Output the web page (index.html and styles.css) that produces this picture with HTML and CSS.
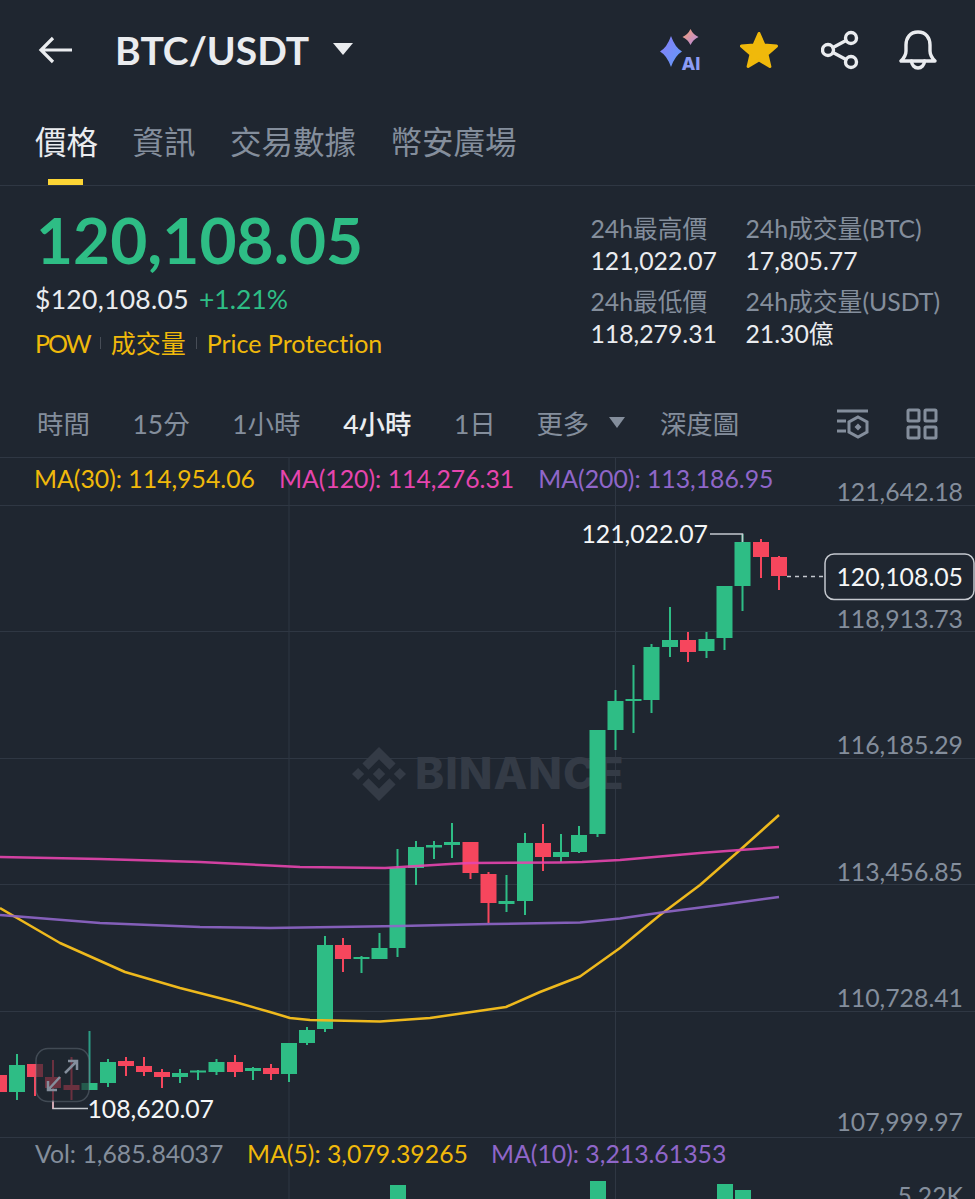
FILE: index.html
```html
<!DOCTYPE html>
<html lang="zh-Hant">

<head>
    <meta charset="UTF-8">
    <meta name="viewport" content="width=device-width, initial-scale=1.0">
    <title>BTC/USDT</title>
    <link rel="stylesheet" href="styles.css">
</head>

<body>
    <header class="topbar">
        <svg class="back" width="36" height="28" viewBox="0 0 36 28">
            <path d="M34 14H3M15 2 3 14l12 12" />
        </svg>
        <h1 class="pair">BTC/USDT</h1>
        <svg class="caret" width="22" height="14" viewBox="0 0 22 14">
            <path d="M1 1h20L11 13z" />
        </svg>
        <div class="actions">
            <svg class="icon-ai" width="44" height="48" viewBox="0 0 44 48">
                <defs>
                    <linearGradient id="aiBlue" x1="0" y1="0" x2="1" y2="1">
                        <stop offset="0" stop-color="#8a7cf8" />
                        <stop offset="1" stop-color="#5f9cf8" />
                    </linearGradient>
                    <linearGradient id="aiPeach" x1="0" y1="0" x2="1" y2="1">
                        <stop offset="0" stop-color="#f6a06e" />
                        <stop offset="1" stop-color="#b58be8" />
                    </linearGradient>
                </defs>
                <path fill="url(#aiBlue)" d="M12 10Q16 21.500 23 25.500 16 29.500 12 41 8 29.500 1 25.500 8 21.500 12 10z" />
                <path fill="url(#aiPeach)" d="M31.500 3Q34 8.500 39.500 11 34 13.500 31.500 19 29 13.500 23.500 11 29 8.500 31.500 3z" />
                <text class="ai-label" x="22.500" y="44">AI</text>
            </svg>
            <svg class="icon-star" width="40" height="38" viewBox="0 0 40 38">
                <path class="star" d="M20 2.500l5 11.500 12.500 1.100-9.500 8.200 2.900 12.200L20 29l-10.900 6.500L12 23.300 2.500 15.100 15 14z" />
            </svg>
            <svg class="stroke-icon" width="38" height="40" viewBox="0 0 38 40">
                <circle cx="30" cy="8" r="5.500" />
                <circle cx="7" cy="20" r="5.500" />
                <circle cx="30" cy="32" r="5.500" />
                <path d="M12 17.500 25 10.500M12 22.500 25 29.500" />
            </svg>
            <svg class="stroke-icon" width="38" height="40" viewBox="0 0 38 40">
                <path d="M19 2C11 2 7 8 7 15v6c0 4-2 7-5 10h34c-3-3-5-6-5-10v-6c0-7-4-13-12-13z" />
                <path d="M12.500 31c0 4 3 7 6.500 7s6.500-3 6.500-7" />
            </svg>
        </div>
    </header>

    <nav class="tabs">
        <a class="tab active">價格</a>
        <a class="tab">資訊</a>
        <a class="tab">交易數據</a>
        <a class="tab">幣安廣場</a>
    </nav>

    <section class="summary">
        <div class="price-col">
            <div class="last-price">120,108.05</div>
            <div class="fiat-row">
                <span class="fiat">$120,108.05</span>
                <span class="change">+1.21%</span>
            </div>
            <div class="tag-row">
                <span class="tag-pow">POW</span>
                <i class="tag-sep"></i>
                <span>成交量</span>
                <i class="tag-sep"></i>
                <span>Price Protection</span>
            </div>
        </div>
        <dl class="stats">
            <div class="stat stat-a">
                <dt>24h最高價</dt>
                <dd>121,022.07</dd>
            </div>
            <div class="stat">
                <dt>24h成交量(BTC)</dt>
                <dd>17,805.77</dd>
            </div>
            <div class="stat stat-a">
                <dt>24h最低價</dt>
                <dd>118,279.31</dd>
            </div>
            <div class="stat">
                <dt>24h成交量(USDT)</dt>
                <dd>21.30億</dd>
            </div>
        </dl>
    </section>

    <div class="intervals">
        <span class="interval">時間</span>
        <span class="interval">15分</span>
        <span class="interval">1小時</span>
        <span class="interval current">4小時</span>
        <span class="interval">1日</span>
        <span class="interval more">更多
            <svg width="16" height="11" viewBox="0 0 16 11">
                <path d="M0 0h16L8 11z" />
            </svg>
        </span>
        <span class="interval">深度圖</span>
        <div class="tools">
            <svg class="tool" width="34" height="32" viewBox="0 0 34 32">
                <path d="M1 3h31M1 13h9M1 23h9" />
                <path d="M22 9l9 5v10l-9 5-9-5V14z" />
                <path class="tool-dot" d="M22 15.500l3.500 3.500-3.500 3.500-3.500-3.500z" />
            </svg>
            <svg class="tool" width="32" height="32" viewBox="0 0 32 32">
                <rect x="2" y="2" width="11" height="11" rx="1" />
                <rect x="19" y="2" width="11" height="11" rx="1" />
                <rect x="2" y="19" width="11" height="11" rx="1" />
                <rect x="19" y="19" width="11" height="11" rx="1" />
            </svg>
        </div>
    </div>

    <section class="chart">
        <div class="ma-legend">
            <span class="ma-30">MA(30): 114,954.06</span>
            <span class="ma-120">MA(120): 114,276.31</span>
            <span class="ma-200">MA(200): 113,186.95</span>
        </div>

        <!-- page coordinates, so y values read the same as the screenshot -->
        <svg class="chart-svg" width="975" height="742" viewBox="0 457 975 742">
            <path class="grid" d="M0 505.500H975M0 631.500H975M0 758.500H975M0 884.500H975M0 1011.500H975M0 1137.500H975M289 457V1199M615.500 457V1199" />

            <g class="watermark">
                <svg x="352" y="747" width="54" height="54" viewBox="0 0 126.610 126.610">
                    <path d="m38.730 53.200 24.590-24.580 24.600 24.600 14.300-14.310L63.320 0 24.430 38.890z" />
                    <path d="m0 63.310 14.300-14.310 14.310 14.310-14.310 14.300z" />
                    <path d="m38.730 73.410 24.590 24.590 24.600-24.600 14.310 14.290-38.900 38.910-38.900-38.880-.02-.02z" />
                    <path d="m98 63.310 14.300-14.310 14.310 14.300-14.310 14.320z" />
                    <path d="m77.830 63.300-14.510-14.520-10.730 10.730-1.240 1.230-2.540 2.540 14.510 14.500 14.510-14.470z" />
                </svg>
                <text class="watermark-text" x="415" y="789">BINANCE</text>
            </g>

            <!-- wicks and bodies, one path per colour -->
            <path class="wick up" d="M17 1054V1100M108 1059V1087M180 1069V1083M198 1070V1080M216.500 1059V1075M253 1067V1080M289 1043V1082M307 1027V1045M325 936V1032M361.500 956V973M379.500 933V959M397.500 849V957M416 841V885M434 841V859M452 823V858M506.500 875V912M525 833V915M561 834V862M579 826V853M597.500 730V837M615.500 690V750M633.500 665V733M651.500 644V713M670 607V657M706.500 632V658M724.500 586V650M742.500 534V611" />
            <path class="wick up-dim" d="M89.500 1031V1090" />
            <path class="body up" d="M17 1065V1092M89.500 1083V1090M108 1062V1083M180 1073V1077M198 1070.500V1072.500M216.500 1062V1072M253 1068V1071M289 1043V1074M307 1030V1043M325 945V1029M361.500 957V959M379.500 948V959M397.500 868V948M416 847V868M434 845V847.500M452 842V845M506.500 901V904M525 843V901M561 852V857M579 835V852M597.500 730V834M615.500 701V730M633.500 699V701M651.500 647V700M670 640V647M706.500 639V651M724.500 586V638M742.500 542V586" />
            <path class="wick down" d="M35 1064V1096M53 1060V1109M71.500 1057V1100M126 1057V1076M144 1057V1076M162 1069V1088M235 1055V1077M271 1064V1080M343 938V972M470.500 842V879M488.500 872V923M543 824V871M688 632V662M761 539V578M779 556V590" />
            <path class="body down" d="M-1 1075V1092M35 1064V1077M53 1077V1088M71.500 1085V1090M126 1061V1066M144 1066V1072M162 1072V1077M235 1062V1072M271 1068V1074M343 945V959M470.500 842V873M488.500 874V903M543 843V857M688 640V652M761 542V557M779 557V576" />

            <path class="ma-line line-30" d="M0 908 60 943 125 972 180 988 235 1002 270 1012 290 1018 310 1020 380 1021.500 430 1018 506 1007 540 992 580 976.500 620 948 660 915 700 885 740 850 779 815" />
            <path class="ma-line line-120" d="M0 857 100 859 200 862 270 865.500 300 867 385 868 450 864 470 863 560 862.500 582 862 620 860 700 853 740 850 779 847" />
            <path class="ma-line line-200" d="M0 915 100 923 200 927 270 928 400 926 490 924 580 922.500 620 918.500 665 912 720 905 779 897" />

            <g class="axis">
                <text x="963" y="501">121,642.18</text>
                <text x="963" y="628">118,913.73</text>
                <text x="963" y="754">116,185.29</text>
                <text x="963" y="881">113,456.85</text>
                <text x="963" y="1007">110,728.41</text>
                <text x="963" y="1131">107,999.97</text>
                <text x="963" y="1205">5.22K</text>
            </g>

            <path class="marker" d="M710 534H742.500V542M53 1100V1108.500H88" />
            <text class="price-label" x="708" y="543">121,022.07</text>
            <text class="price-label" x="214" y="1118">108,620.07</text>

            <path class="last-dash" d="M787 576.500H825" />
            <rect class="last-box" x="825" y="554" width="149" height="45.500" rx="9" />
            <text class="price-label" x="963" y="586">120,108.05</text>

            <rect class="expand-box" x="36" y="1048.500" width="53" height="53" rx="12" />
            <path class="expand" d="M48 1090 60 1077M48 1081V1090H57M65 1073 77 1061M68 1061H77V1070" />

            <text class="vol-text" x="35" y="1163">
                <tspan class="vol-label">Vol: 1,685.84037</tspan>
                <tspan class="vol-ma5" x="247">MA(5): 3,079.39265</tspan>
                <tspan class="vol-ma10" x="491">MA(10): 3,213.61353</tspan>
            </text>
            <path class="vol-bars" d="M390 1185h16v14h-16zM590 1181h16v18h-16zM717 1184h16v15h-16zM735 1190h16v9h-16z" />
        </svg>
    </section>
</body>

</html>
```

FILE: styles.css
```css
html {
    height: 100%;
}

body {
    margin: 0;
    width: 975px;
    height: 1199px;
    overflow: hidden;
    background: #1f2630;
    color: #eaecef;
    font-family: "Lato", "Noto Sans CJK TC", sans-serif;
    font-variant-ligatures: none;
}

/* top bar */
.topbar {
    display: flex;
    align-items: center;
    height: 100px;
    padding: 0 38px 0 38px;
}

.back {
    fill: none;
    stroke: #eaecef;
    stroke-width: 3.2;
}

.pair {
    margin: 0 0 0 41px;
    font-size: 39px;
    font-weight: 700;
    line-height: 1;
}

.caret {
    margin-left: 23px;
    margin-top: -3px;
    fill: #eaecef;
}

.actions {
    display: flex;
    align-items: center;
    gap: 40px;
    margin-left: auto;
}

.icon-ai {
    margin-right: -4px;
}

.icon-star {
    margin-right: 2px;
}

.ai-label {
    font-family: "Inter", sans-serif;
    font-size: 18px;
    font-weight: 800;
    fill: #8c9cf5;
}

.star {
    fill: #f0b90b;
    stroke: #f0b90b;
    stroke-width: 3;
    stroke-linejoin: round;
}

.stroke-icon {
    fill: none;
    stroke: #eaecef;
    stroke-width: 3.4;
    stroke-linejoin: round;
    stroke-linecap: round;
}

/* tabs */
.tabs {
    display: flex;
    gap: 34.500px;
    height: 86px;
    padding-left: 35px;
    border-bottom: 1px solid #2f3743;
    box-sizing: border-box;
}

.tab {
    position: relative;
    margin-top: 19px;
    font-size: 31.500px;
    line-height: 46px;
    color: #848e9c;
}

.tab.active {
    color: #eaecef;
}

.tab.active::after {
    content: "";
    position: absolute;
    left: 13px;
    bottom: 0;
    width: 35px;
    height: 6px;
    background: #fcd535;
}

/* price summary */
.summary {
    display: flex;
    justify-content: space-between;
    height: 171px;
    padding: 0 35px;
    box-sizing: border-box;
}

.last-price {
    margin: 18px 0 0 1px;
    font-size: 64px;
    line-height: 72px;
    font-weight: 700;
    color: #2ebd85;
}

.fiat-row {
    display: flex;
    gap: 10px;
    margin-top: 8px;
    font-size: 26.500px;
    line-height: 30px;
}

.fiat {
    letter-spacing: .3px;
}

.change {
    color: #2ebd85;
}

.tag-row {
    display: flex;
    align-items: center;
    gap: 10px;
    margin-top: 14px;
    font-size: 25px;
    line-height: 30px;
    color: #f0b90b;
}

.tag-pow {
    letter-spacing: -2px;
}

.tag-sep {
    width: 1px;
    height: 12px;
    background: #474d57;
}

.stats {
    display: grid;
    grid-template-columns: 155px auto;
    row-gap: 9px;
    margin: 27px 0 0;
    align-content: start;
}

.stat dt {
    font-size: 24.800px;
    line-height: 32px;
    color: #848e9c;
}

.stat dd {
    margin: 0;
    font-size: 24.800px;
    line-height: 32px;
}

/* interval row */
.intervals {
    display: flex;
    align-items: center;
    gap: 42.500px;
    height: 100px;
    padding-left: 37px;
    padding-top: 30px;
    box-sizing: border-box;
    font-size: 26.500px;
    color: #848e9c;
}

.interval {
    white-space: nowrap;
}

.interval.current {
    color: #eaecef;
    font-weight: 500;
}

.more {
    display: flex;
    align-items: center;
    gap: 20px;
    margin-left: -2px;
    margin-right: -8px;
}

.more svg {
    fill: #848e9c;
}

.tools {
    display: flex;
    gap: 36px;
    margin-left: auto;
    margin-top: 3px;
    padding-right: 37px;
}

.tool {
    fill: none;
    stroke: #848e9c;
    stroke-width: 3;
}

.tool .tool-dot {
    fill: #848e9c;
    stroke: none;
}

/* chart */
.chart {
    position: relative;
    height: 742px;
    border-top: 1px solid #2f3743;
    box-sizing: border-box;
}

.chart-svg {
    display: block;
    margin-top: -1px;
}

.ma-legend {
    position: absolute;
    top: 6px;
    left: 34px;
    display: flex;
    gap: 24px;
    font-size: 24.800px;
    line-height: 30px;
}

.ma-30 {
    color: #f0b90b;
}

.ma-120 {
    color: #e645ae;
}

.ma-200 {
    color: #8f66c9;
}

.grid {
    fill: none;
    stroke: #2f3743;
    stroke-width: 1;
}

.watermark {
    fill: #343b46;
}

.watermark-text {
    font-family: "Inter", sans-serif;
    font-size: 44px;
    font-weight: 800;
    letter-spacing: 1px;
}

.wick {
    fill: none;
    stroke-width: 2;
}

.body {
    fill: none;
    stroke-width: 16;
}

.up {
    stroke: #2ebd85;
}

.up-dim {
    stroke: #2c9c85;
}

.down {
    stroke: #f6465d;
}

.ma-line {
    fill: none;
    stroke-width: 2.500;
    stroke-linejoin: round;
}

.line-30 {
    stroke: #eeb91d;
}

.line-120 {
    stroke: #e645ae;
    opacity: .9;
}

.line-200 {
    stroke: #8f66c9;
    opacity: .9;
}

.axis text {
    font-size: 24.800px;
    fill: #848e9c;
    text-anchor: end;
}

.marker {
    fill: none;
    stroke: #c4c8ce;
    stroke-width: 1.500;
}

.price-label {
    font-size: 24.800px;
    fill: #f5f6f7;
    text-anchor: end;
}

.last-dash {
    fill: none;
    stroke: #c4c8ce;
    stroke-width: 1.500;
    stroke-dasharray: 4 4;
}

.last-box {
    fill: #1f2630;
    stroke: #c4c8ce;
    stroke-width: 1.500;
}

.expand-box {
    fill: rgba(31, 38, 48, .65);
    stroke: rgba(132, 142, 156, .35);
    stroke-width: 1.500;
}

.expand {
    fill: none;
    stroke: #848e9c;
    stroke-width: 2.500;
}

.vol-text {
    font-size: 24.800px;
}

.vol-label {
    fill: #848e9c;
}

.vol-ma5 {
    fill: #f0b90b;
}

.vol-ma10 {
    fill: #8f66c9;
}

.vol-bars {
    fill: #2ebd85;
}
```
